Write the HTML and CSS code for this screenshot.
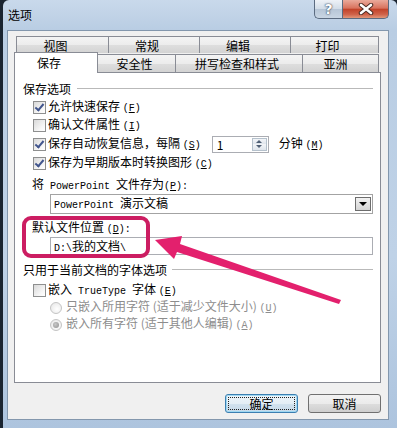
FILE: index.html
```html
<!DOCTYPE html>
<html lang="zh-CN">
<head>
<meta charset="UTF-8">
<title>选项</title>
<link rel="stylesheet" href="styles.css">
</head>
<body>
<div class="window">
  <div class="titlebar">
    <span class="title">选项</span>
    <div class="caption-btns">
      <span class="cap help">?</span>
      <span class="cap close">
        <svg width="16" height="12" viewBox="0 0 16 12">
          <path d="M3 2 L13 10 M13 2 L3 10" stroke="#4a2a22" stroke-width="4.5" stroke-linecap="round"/>
          <path d="M3 2 L13 10 M13 2 L3 10" stroke="#fff" stroke-width="2.6" stroke-linecap="round"/>
        </svg>
      </span>
    </div>
  </div>

  <div class="client">
    <div class="tabs">
      <div class="tab-row row1">
        <div class="tab w93">视图</div>
        <div class="tab w92">常规</div>
        <div class="tab w92">编辑</div>
        <div class="tab w89">打印</div>
      </div>
      <div class="tab-row row2">
        <div class="tab sel">保存</div>
        <div class="tab w79">安全性</div>
        <div class="tab w128">拼写检查和样式</div>
        <div class="tab w77">亚洲</div>
      </div>
    </div>

    <div class="panel">
      <div class="group-title"><span>保存选项</span></div>
      <div class="row first">
        <span class="cb on"></span>
        <span class="txt">允许快速保存 <span class="acc">(<u>F</u>)</span></span>
      </div>
      <div class="row">
        <span class="cb"></span>
        <span class="txt">确认文件属性 <span class="acc">(<u>I</u>)</span></span>
      </div>
      <div class="row spin-row">
        <span class="cb on"></span>
        <span class="txt">保存自动恢复信息，每隔 <span class="acc">(<u>S</u>)</span></span>
        <div class="spin">
          <span>1</span>
          <div class="spin-btns">
            <span class="up"></span>
            <span class="down"></span>
          </div>
        </div>
        <span class="txt unit">分钟 <span class="acc">(<u>M</u>)</span></span>
      </div>
      <div class="row">
        <span class="cb on"></span>
        <span class="txt">保存为早期版本时转换图形 <span class="acc">(<u>C</u>)</span></span>
      </div>

      <div class="label first-label">将<span class="mono">&nbsp;PowerPoint&nbsp;</span>文件存为<span class="mono">(<u>P</u>):</span></div>
      <div class="select">
        <span class="txt"><span class="mono">PowerPoint&nbsp;</span>演示文稿</span>
        <span class="dd"></span>
      </div>

      <div class="label second-label">默认文件位置 <span class="acc">(<u>D</u>):</span></div>
      <div class="field"><span class="mono">D:\</span>我的文档<span class="mono">\</span></div>

      <div class="group-title second-group"><span>只用于当前文档的字体选项</span></div>
      <div class="row embed-row">
        <span class="cb"></span>
        <span class="txt">嵌入<span class="mono">&nbsp;TrueType&nbsp;</span>字体 <span class="acc">(<u>E</u>)</span></span>
      </div>
      <div class="row radio-row">
        <span class="radio"></span>
        <span class="txt">只嵌入所用字符 (适于减少文件大小) <span class="acc">(<u>U</u>)</span></span>
      </div>
      <div class="row radio-row">
        <span class="radio on"></span>
        <span class="txt">嵌入所有字符 (适于其他人编辑) <span class="acc">(<u>A</u>)</span></span>
      </div>
    </div>

    <div class="buttons">
      <div class="btn default">确定</div>
      <div class="btn">取消</div>
    </div>
  </div>

  <div class="callout"></div>
  <svg class="arrow" width="400" height="428" viewBox="0 0 400 428">
    <polygon points="155,240 182,236 180,244 341,300 339,304 177,252 174,259" fill="#e3206d"/>
  </svg>
</div>
</body>
</html>
```

FILE: styles.css
```css
body {
  margin: 0;
  background: #1a2430;
  font-family: "Noto Sans CJK SC", "Liberation Sans", sans-serif;
  font-size: 12px;
  color: #000;
}
.window {
  position: relative;
  margin-left: 3px;
  width: 394px;
  height: 428px;
  box-sizing: border-box;
  padding: 0 8px 8px 4px;
  display: flex;
  flex-direction: column;
  background: linear-gradient(180deg, #c9d9eb 0, #b9cde3 30px, #bfd2e7 60%, #adc4de 100%);
  border-radius: 6px 6px 0 0;
}
.titlebar {
  height: 30px;
  display: flex;
  align-items: flex-start;
}
.title {
  margin: 6px 0 0 1px;
  line-height: 18px;
}
.caption-btns {
  margin-left: auto;
  display: flex;
}
.cap {
  height: 19px;
  box-sizing: border-box;
  display: flex;
  align-items: center;
  justify-content: center;
  border: 1px solid #5b6b80;
  border-top: none;
}
.help {
  width: 28px;
  border-right: none;
  border-radius: 0 0 0 5px;
  background: linear-gradient(#eef2f7, #d3dde8 48%, #b7c6d7 52%, #c9d6e4);
  color: #fff;
  font: bold 14px "DejaVu Sans", sans-serif;
  text-shadow: 0 0 1px #2e3d52, 0 0 2px #2e3d52;
}
.close {
  width: 47px;
  border-radius: 0 0 5px 0;
  background: linear-gradient(#eaaa9b, #d9735e 45%, #c2432a 52%, #d0634a 80%, #e2977a);
}
.client {
  flex: 1;
  display: flex;
  flex-direction: column;
  background: #f0f0f0;
  border: 1px solid #8397ad;
  padding: 5px 7px 0 6px;
}

/* tabs */
.tab-row {
  display: flex;
  align-items: flex-start;
}
.row1 {
  margin-left: 2px;
  height: 17px;
}
.row2 {
  height: 19px;
}
.tab {
  box-sizing: border-box;
  height: 17px;
  margin-left: -1px;
  border: 1px solid #898c95;
  border-bottom: none;
  background: linear-gradient(#f4f4f4, #ececec 50%, #dedede 51%, #d3d3d3);
  display: flex;
  align-items: center;
  justify-content: center;
  padding-right: 14px;
}
.row1 .tab:first-child,
.row2 .tab:first-child {
  margin-left: 0;
}
.row2 .tab {
  height: 18px;
  margin-top: 1px;
  padding-right: 4px;
}
.row2 .tab.sel {
  position: relative;
  z-index: 2;
  width: 84px;
  height: 21px;
  margin-top: -1px;
  margin-bottom: -1px;
  background: #fff;
  padding: 0 14px 2px 0;
}
.row2 .tab.w77 { padding-right: 10px; }
.w93 { width: 93px; }
.w92 { width: 92px; }
.w89 { width: 89px; }
.w79 { width: 79px; }
.w128 { width: 128px; }
.w77 { width: 77px; }

/* panel */
.panel {
  height: 311px;
  box-sizing: border-box;
  border: 1px solid #898c95;
  background: #fff;
  padding: 7px 7px 0 8px;
}
.group-title {
  height: 16px;
  display: flex;
  align-items: center;
  gap: 6px;
}
.group-title::after {
  content: "";
  flex: 1;
  border-top: 1px solid #b9b9b9;
}
.second-group {
  margin-top: 6px;
  gap: 5px;
}
.row {
  height: 18px;
  display: flex;
  align-items: center;
  padding-left: 10px;
}
.txt {
  line-height: 16px;
  white-space: nowrap;
}
.row.first { margin-top: 2px; }
.spin-row { height: 20px; }
.embed-row { margin-top: 4px; }
.radio-row {
  height: 17px;
  padding-left: 27px;
  color: #8d8d8d;
}
.acc,
.mono {
  font-family: "Liberation Mono", monospace;
  font-size: 10px;
}
.cb {
  position: relative;
  flex: none;
  width: 13px;
  height: 13px;
  box-sizing: border-box;
  margin-right: 2px;
  border: 1px solid #8e8f8f;
  background: linear-gradient(135deg, #d9d9d9, #f7f7f7 70%, #fff);
}
.cb.on::after {
  content: "";
  position: absolute;
  left: 3px;
  top: 0;
  width: 3px;
  height: 7px;
  border: solid #41558d;
  border-width: 0 2px 2px 0;
  transform: rotate(40deg);
}
.radio {
  position: relative;
  flex: none;
  width: 12px;
  height: 12px;
  box-sizing: border-box;
  margin-right: 4px;
  border-radius: 50%;
  border: 1px solid #c4c4c4;
  background: radial-gradient(circle at 60% 60%, #fff, #e4e4e4);
}
.radio.on::after {
  content: "";
  position: absolute;
  left: 2px;
  top: 2px;
  width: 6px;
  height: 6px;
  border-radius: 50%;
  background: radial-gradient(circle at 40% 40%, #c8c8c8, #8e8e8e);
}
.spin {
  margin-left: 11px;
  width: 57px;
  height: 17px;
  box-sizing: border-box;
  border: 1px solid #abadb3;
  display: flex;
  align-items: center;
  justify-content: space-between;
  padding-left: 4px;
  background: #fff;
}
.spin-btns {
  width: 15px;
  height: 13px;
  margin-right: 1px;
  display: flex;
  flex-direction: column;
  border: 1px solid #b5c1cc;
  box-sizing: border-box;
}
.spin-btns span {
  flex: 1;
  display: flex;
  align-items: center;
  justify-content: center;
  background: linear-gradient(#f3f5f8, #dfe5ec);
}
.spin-btns .up::after {
  content: "";
  border: 3px solid transparent;
  border-top: none;
  border-bottom: 3px solid #4f5f75;
}
.spin-btns .down::after {
  content: "";
  border: 3px solid transparent;
  border-bottom: none;
  border-top: 3px solid #4f5f75;
}
.unit { margin-left: 10px; }
.label {
  height: 16px;
  line-height: 16px;
  padding-left: 9px;
  white-space: nowrap;
}
.first-label { margin-top: 4px; }
.second-label { margin-top: 5px; }
.select {
  margin: 2px 0 0 27px;
  height: 20px;
  box-sizing: border-box;
  border: 1px solid #a3a3a3;
  display: flex;
  align-items: center;
  padding-left: 3px;
}
.dd {
  margin-left: auto;
  margin-right: 1px;
  width: 16px;
  height: 14px;
  box-sizing: border-box;
  border: 1px solid #6d6d6d;
  background: linear-gradient(#f2f2f2, #e2e2e2 50%, #d4d4d4);
  display: flex;
  align-items: center;
  justify-content: center;
}
.dd::after {
  content: "";
  border: 4px solid transparent;
  border-bottom: none;
  border-top: 4px solid #000;
}
.field {
  margin: 2px 0 0 27px;
  height: 18px;
  line-height: 16px;
  box-sizing: border-box;
  border: 1px solid #abadb3;
  padding-left: 3px;
  white-space: nowrap;
}

/* dialog buttons */
.buttons {
  display: flex;
  justify-content: flex-end;
  gap: 10px;
  margin-top: 11px;
}
.btn {
  position: relative;
  width: 73px;
  height: 19px;
  box-sizing: border-box;
  border: 1px solid #707070;
  border-radius: 3px;
  background: linear-gradient(#f2f2f2, #ebebeb 50%, #dddddd 51%, #cfcfcf);
  display: flex;
  align-items: center;
  justify-content: center;
}
.btn.default {
  border-color: #3c7fb1;
  box-shadow: inset 0 0 0 1px #9fd8f2;
  background: linear-gradient(#eef5fa, #e4eef5 50%, #d2e2ee 51%, #c6d9e8);
}
.btn.default::before {
  content: "";
  position: absolute;
  inset: 2px;
  border: 1px dotted #222;
}

/* annotation overlay */
.callout {
  position: absolute;
  left: 19px;
  top: 216px;
  width: 128px;
  height: 42px;
  box-sizing: border-box;
  border: 4px solid #cc1d62;
  border-radius: 9px;
}
.arrow {
  position: absolute;
  left: -3px;
  top: 0;
}
```
